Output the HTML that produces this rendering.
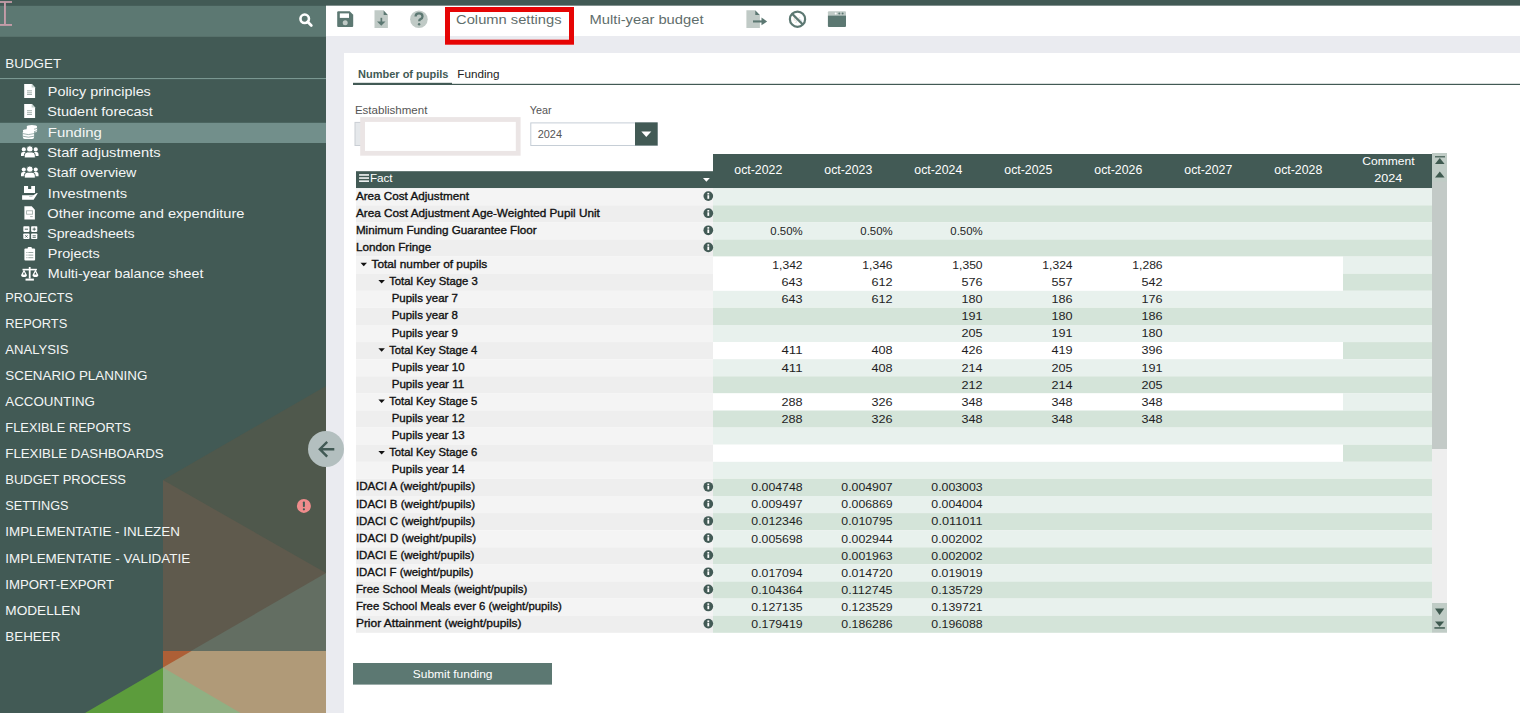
<!DOCTYPE html>
<html><head><meta charset="utf-8"><title>Funding</title>
<style>
html,body{margin:0;padding:0;width:1520px;height:713px;overflow:hidden;background:#eaebf0;font-family:"Liberation Sans", sans-serif;}
svg{display:block;position:absolute;left:0;top:0;font-family:"Liberation Sans", sans-serif;}
</style></head><body>
<svg width="1520" height="713" viewBox="0 0 1520 713">
<rect x="0.00" y="0.00" width="1520.00" height="713.00" fill="#eaebf0" />
<rect x="0.00" y="0.00" width="326.00" height="713.00" fill="#425a55" />
<polygon points="326.00,386.00 163.00,480.00 326.00,600.00" fill="#4f584c" />
<polygon points="163.00,480.00 326.00,573.00 326.00,713.00 163.00,713.00" fill="#5f5a4d" />
<polygon points="326.00,573.00 326.00,655.00 184.00,655.00" fill="#636e62" />
<polygon points="163.00,651.00 326.00,651.00 326.00,713.00 163.00,713.00" fill="#b09a78" />
<polygon points="163.00,651.00 191.50,651.00 163.00,667.50" fill="#ad5f36" />
<polygon points="163.00,667.50 240.50,713.00 163.00,713.00" fill="#90b083" />
<polygon points="163.00,667.50 163.00,713.00 85.00,713.00" fill="#5c9c3c" />
<rect x="0.00" y="0.00" width="1520.00" height="5.80" fill="#425a55" />
<rect x="0.00" y="5.80" width="326.00" height="31.00" fill="#5c7872" />
<rect x="326.00" y="5.80" width="1194.00" height="30.20" fill="#ffffff" />
<rect x="344.00" y="53.00" width="1176.00" height="660.00" fill="#ffffff" />
<text x="5.29" y="68.40" font-size="13" fill="#f4f6f5" textLength="55.82" lengthAdjust="spacingAndGlyphs">BUDGET</text>
<rect x="0.00" y="78.00" width="326.00" height="1.10" fill="#7a9791" />
<rect x="0.00" y="122.80" width="326.00" height="20.20" fill="#728f8b" />
<text x="47.89" y="96.10" font-size="13" fill="#f4f6f5" textLength="102.92" lengthAdjust="spacingAndGlyphs">Policy principles</text>
<text x="47.29" y="115.80" font-size="13" fill="#f4f6f5" textLength="105.62" lengthAdjust="spacingAndGlyphs">Student forecast</text>
<text x="47.89" y="136.70" font-size="13" fill="#f4f6f5" textLength="53.92" lengthAdjust="spacingAndGlyphs">Funding</text>
<text x="47.29" y="156.80" font-size="13" fill="#f4f6f5" textLength="113.32" lengthAdjust="spacingAndGlyphs">Staff adjustments</text>
<text x="47.29" y="176.70" font-size="13" fill="#f4f6f5" textLength="89.12" lengthAdjust="spacingAndGlyphs">Staff overview</text>
<text x="47.89" y="197.50" font-size="13" fill="#f4f6f5" textLength="79.22" lengthAdjust="spacingAndGlyphs">Investments</text>
<text x="47.29" y="217.70" font-size="13" fill="#f4f6f5" textLength="197.22" lengthAdjust="spacingAndGlyphs">Other income and expenditure</text>
<text x="47.29" y="237.70" font-size="13" fill="#f4f6f5" textLength="87.42" lengthAdjust="spacingAndGlyphs">Spreadsheets</text>
<text x="47.89" y="258.30" font-size="13" fill="#f4f6f5" textLength="51.92" lengthAdjust="spacingAndGlyphs">Projects</text>
<text x="47.89" y="278.30" font-size="13" fill="#f4f6f5" textLength="155.52" lengthAdjust="spacingAndGlyphs">Multi-year balance sheet</text>
<text x="5.29" y="302.20" font-size="13" fill="#f4f6f5" textLength="67.62" lengthAdjust="spacingAndGlyphs">PROJECTS</text>
<text x="5.29" y="328.23" font-size="13" fill="#f4f6f5" textLength="62.02" lengthAdjust="spacingAndGlyphs">REPORTS</text>
<text x="5.29" y="354.26" font-size="13" fill="#f4f6f5" textLength="63.12" lengthAdjust="spacingAndGlyphs">ANALYSIS</text>
<text x="5.29" y="380.29" font-size="13" fill="#f4f6f5" textLength="142.12" lengthAdjust="spacingAndGlyphs">SCENARIO PLANNING</text>
<text x="5.29" y="406.32" font-size="13" fill="#f4f6f5" textLength="89.62" lengthAdjust="spacingAndGlyphs">ACCOUNTING</text>
<text x="5.29" y="432.35" font-size="13" fill="#f4f6f5" textLength="125.62" lengthAdjust="spacingAndGlyphs">FLEXIBLE REPORTS</text>
<text x="5.29" y="458.38" font-size="13" fill="#f4f6f5" textLength="158.42" lengthAdjust="spacingAndGlyphs">FLEXIBLE DASHBOARDS</text>
<text x="5.29" y="484.41" font-size="13" fill="#f4f6f5" textLength="120.72" lengthAdjust="spacingAndGlyphs">BUDGET PROCESS</text>
<text x="5.29" y="510.44" font-size="13" fill="#f4f6f5" textLength="63.22" lengthAdjust="spacingAndGlyphs">SETTINGS</text>
<text x="5.29" y="536.47" font-size="13" fill="#f4f6f5" textLength="174.62" lengthAdjust="spacingAndGlyphs">IMPLEMENTATIE - INLEZEN</text>
<text x="5.29" y="562.50" font-size="13" fill="#f4f6f5" textLength="184.92" lengthAdjust="spacingAndGlyphs">IMPLEMENTATIE - VALIDATIE</text>
<text x="5.29" y="588.53" font-size="13" fill="#f4f6f5" textLength="108.92" lengthAdjust="spacingAndGlyphs">IMPORT-EXPORT</text>
<text x="5.29" y="614.56" font-size="13" fill="#f4f6f5" textLength="75.02" lengthAdjust="spacingAndGlyphs">MODELLEN</text>
<text x="5.29" y="640.59" font-size="13" fill="#f4f6f5" textLength="55.02" lengthAdjust="spacingAndGlyphs">BEHEER</text>
<rect x="356.00" y="171.20" width="357.00" height="17.00" fill="#425a55" />
<rect x="713.00" y="154.00" width="719.00" height="34.20" fill="#425a55" />
<rect x="356.00" y="188.20" width="357.00" height="17.10" fill="#f4f4f4" />
<rect x="713.00" y="188.20" width="630.00" height="17.10" fill="#e8f1ed" />
<rect x="1343.00" y="188.20" width="89.00" height="17.10" fill="#e8f1ed" />
<rect x="356.00" y="205.30" width="357.00" height="17.10" fill="#eeeeee" />
<rect x="713.00" y="205.30" width="630.00" height="17.10" fill="#d4e4d9" />
<rect x="1343.00" y="205.30" width="89.00" height="17.10" fill="#d4e4d9" />
<rect x="356.00" y="222.40" width="357.00" height="17.10" fill="#f4f4f4" />
<rect x="713.00" y="222.40" width="630.00" height="17.10" fill="#e8f1ed" />
<rect x="1343.00" y="222.40" width="89.00" height="17.10" fill="#e8f1ed" />
<rect x="356.00" y="239.50" width="357.00" height="17.10" fill="#eeeeee" />
<rect x="713.00" y="239.50" width="630.00" height="17.10" fill="#d4e4d9" />
<rect x="1343.00" y="239.50" width="89.00" height="17.10" fill="#d4e4d9" />
<rect x="356.00" y="256.60" width="357.00" height="17.10" fill="#f4f4f4" />
<rect x="713.00" y="256.60" width="630.00" height="17.10" fill="#ffffff" />
<rect x="1343.00" y="256.60" width="89.00" height="17.10" fill="#e8f1ed" />
<rect x="356.00" y="273.70" width="357.00" height="17.10" fill="#eeeeee" />
<rect x="713.00" y="273.70" width="630.00" height="17.10" fill="#ffffff" />
<rect x="1343.00" y="273.70" width="89.00" height="17.10" fill="#d4e4d9" />
<rect x="356.00" y="290.80" width="357.00" height="17.10" fill="#f4f4f4" />
<rect x="713.00" y="290.80" width="630.00" height="17.10" fill="#e8f1ed" />
<rect x="1343.00" y="290.80" width="89.00" height="17.10" fill="#e8f1ed" />
<rect x="356.00" y="307.90" width="357.00" height="17.10" fill="#eeeeee" />
<rect x="713.00" y="307.90" width="630.00" height="17.10" fill="#d4e4d9" />
<rect x="1343.00" y="307.90" width="89.00" height="17.10" fill="#d4e4d9" />
<rect x="356.00" y="325.00" width="357.00" height="17.10" fill="#f4f4f4" />
<rect x="713.00" y="325.00" width="630.00" height="17.10" fill="#e8f1ed" />
<rect x="1343.00" y="325.00" width="89.00" height="17.10" fill="#e8f1ed" />
<rect x="356.00" y="342.10" width="357.00" height="17.10" fill="#eeeeee" />
<rect x="713.00" y="342.10" width="630.00" height="17.10" fill="#ffffff" />
<rect x="1343.00" y="342.10" width="89.00" height="17.10" fill="#d4e4d9" />
<rect x="356.00" y="359.20" width="357.00" height="17.10" fill="#f4f4f4" />
<rect x="713.00" y="359.20" width="630.00" height="17.10" fill="#e8f1ed" />
<rect x="1343.00" y="359.20" width="89.00" height="17.10" fill="#e8f1ed" />
<rect x="356.00" y="376.30" width="357.00" height="17.10" fill="#eeeeee" />
<rect x="713.00" y="376.30" width="630.00" height="17.10" fill="#d4e4d9" />
<rect x="1343.00" y="376.30" width="89.00" height="17.10" fill="#d4e4d9" />
<rect x="356.00" y="393.40" width="357.00" height="17.10" fill="#f4f4f4" />
<rect x="713.00" y="393.40" width="630.00" height="17.10" fill="#ffffff" />
<rect x="1343.00" y="393.40" width="89.00" height="17.10" fill="#e8f1ed" />
<rect x="356.00" y="410.50" width="357.00" height="17.10" fill="#eeeeee" />
<rect x="713.00" y="410.50" width="630.00" height="17.10" fill="#d4e4d9" />
<rect x="1343.00" y="410.50" width="89.00" height="17.10" fill="#d4e4d9" />
<rect x="356.00" y="427.60" width="357.00" height="17.10" fill="#f4f4f4" />
<rect x="713.00" y="427.60" width="630.00" height="17.10" fill="#e8f1ed" />
<rect x="1343.00" y="427.60" width="89.00" height="17.10" fill="#e8f1ed" />
<rect x="356.00" y="444.70" width="357.00" height="17.10" fill="#eeeeee" />
<rect x="713.00" y="444.70" width="630.00" height="17.10" fill="#ffffff" />
<rect x="1343.00" y="444.70" width="89.00" height="17.10" fill="#d4e4d9" />
<rect x="356.00" y="461.80" width="357.00" height="17.10" fill="#f4f4f4" />
<rect x="713.00" y="461.80" width="630.00" height="17.10" fill="#e8f1ed" />
<rect x="1343.00" y="461.80" width="89.00" height="17.10" fill="#e8f1ed" />
<rect x="356.00" y="478.90" width="357.00" height="17.10" fill="#eeeeee" />
<rect x="713.00" y="478.90" width="630.00" height="17.10" fill="#d4e4d9" />
<rect x="1343.00" y="478.90" width="89.00" height="17.10" fill="#d4e4d9" />
<rect x="356.00" y="496.00" width="357.00" height="17.10" fill="#f4f4f4" />
<rect x="713.00" y="496.00" width="630.00" height="17.10" fill="#e8f1ed" />
<rect x="1343.00" y="496.00" width="89.00" height="17.10" fill="#e8f1ed" />
<rect x="356.00" y="513.10" width="357.00" height="17.10" fill="#eeeeee" />
<rect x="713.00" y="513.10" width="630.00" height="17.10" fill="#d4e4d9" />
<rect x="1343.00" y="513.10" width="89.00" height="17.10" fill="#d4e4d9" />
<rect x="356.00" y="530.20" width="357.00" height="17.10" fill="#f4f4f4" />
<rect x="713.00" y="530.20" width="630.00" height="17.10" fill="#e8f1ed" />
<rect x="1343.00" y="530.20" width="89.00" height="17.10" fill="#e8f1ed" />
<rect x="356.00" y="547.30" width="357.00" height="17.10" fill="#eeeeee" />
<rect x="713.00" y="547.30" width="630.00" height="17.10" fill="#d4e4d9" />
<rect x="1343.00" y="547.30" width="89.00" height="17.10" fill="#d4e4d9" />
<rect x="356.00" y="564.40" width="357.00" height="17.10" fill="#f4f4f4" />
<rect x="713.00" y="564.40" width="630.00" height="17.10" fill="#e8f1ed" />
<rect x="1343.00" y="564.40" width="89.00" height="17.10" fill="#e8f1ed" />
<rect x="356.00" y="581.50" width="357.00" height="17.10" fill="#eeeeee" />
<rect x="713.00" y="581.50" width="630.00" height="17.10" fill="#d4e4d9" />
<rect x="1343.00" y="581.50" width="89.00" height="17.10" fill="#d4e4d9" />
<rect x="356.00" y="598.60" width="357.00" height="17.10" fill="#f4f4f4" />
<rect x="713.00" y="598.60" width="630.00" height="17.10" fill="#e8f1ed" />
<rect x="1343.00" y="598.60" width="89.00" height="17.10" fill="#e8f1ed" />
<rect x="356.00" y="615.70" width="357.00" height="17.10" fill="#eeeeee" />
<rect x="713.00" y="615.70" width="630.00" height="17.10" fill="#d4e4d9" />
<rect x="1343.00" y="615.70" width="89.00" height="17.10" fill="#d4e4d9" />
<text x="355.90" y="199.70" font-size="11" fill="#111111" stroke="#111111" stroke-width="0.35" textLength="113.00" lengthAdjust="spacingAndGlyphs">Area Cost Adjustment</text>
<circle cx="708.3" cy="196.10" r="4.85" fill="#425a55"/>
<rect x="707.40" y="195.20" width="1.8" height="3.6" fill="#fff"/>
<rect x="707.40" y="192.90" width="1.8" height="1.6" fill="#fff"/>
<text x="355.90" y="216.80" font-size="11" fill="#111111" stroke="#111111" stroke-width="0.35" textLength="243.90" lengthAdjust="spacingAndGlyphs">Area Cost Adjustment Age-Weighted Pupil Unit</text>
<circle cx="708.3" cy="213.20" r="4.85" fill="#425a55"/>
<rect x="707.40" y="212.30" width="1.8" height="3.6" fill="#fff"/>
<rect x="707.40" y="210.00" width="1.8" height="1.6" fill="#fff"/>
<text x="355.90" y="233.90" font-size="11" fill="#111111" stroke="#111111" stroke-width="0.35" textLength="180.80" lengthAdjust="spacingAndGlyphs">Minimum Funding Guarantee Floor</text>
<circle cx="708.3" cy="230.30" r="4.85" fill="#425a55"/>
<rect x="707.40" y="229.40" width="1.8" height="3.6" fill="#fff"/>
<rect x="707.40" y="227.10" width="1.8" height="1.6" fill="#fff"/>
<text x="355.90" y="251.00" font-size="11" fill="#111111" stroke="#111111" stroke-width="0.35" textLength="75.40" lengthAdjust="spacingAndGlyphs">London Fringe</text>
<circle cx="708.3" cy="247.40" r="4.85" fill="#425a55"/>
<rect x="707.40" y="246.50" width="1.8" height="3.6" fill="#fff"/>
<rect x="707.40" y="244.20" width="1.8" height="1.6" fill="#fff"/>
<text x="371.50" y="268.10" font-size="11" fill="#111111" stroke="#111111" stroke-width="0.35" textLength="115.80" lengthAdjust="spacingAndGlyphs">Total number of pupils</text>
<polygon points="360.50,262.80 367.00,262.80 363.75,266.30" fill="#111111" />
<text x="389.20" y="285.20" font-size="11" fill="#111111" stroke="#111111" stroke-width="0.35" textLength="88.60" lengthAdjust="spacingAndGlyphs">Total Key Stage 3</text>
<polygon points="378.40,279.90 384.90,279.90 381.65,283.40" fill="#111111" />
<text x="391.70" y="302.30" font-size="11" fill="#111111" stroke="#111111" stroke-width="0.35" textLength="66.20" lengthAdjust="spacingAndGlyphs">Pupils year 7</text>
<text x="391.70" y="319.40" font-size="11" fill="#111111" stroke="#111111" stroke-width="0.35" textLength="66.20" lengthAdjust="spacingAndGlyphs">Pupils year 8</text>
<text x="391.70" y="336.50" font-size="11" fill="#111111" stroke="#111111" stroke-width="0.35" textLength="66.20" lengthAdjust="spacingAndGlyphs">Pupils year 9</text>
<text x="389.20" y="353.60" font-size="11" fill="#111111" stroke="#111111" stroke-width="0.35" textLength="88.20" lengthAdjust="spacingAndGlyphs">Total Key Stage 4</text>
<polygon points="378.40,348.30 384.90,348.30 381.65,351.80" fill="#111111" />
<text x="391.70" y="370.70" font-size="11" fill="#111111" stroke="#111111" stroke-width="0.35" textLength="72.90" lengthAdjust="spacingAndGlyphs">Pupils year 10</text>
<text x="391.70" y="387.80" font-size="11" fill="#111111" stroke="#111111" stroke-width="0.35" textLength="72.50" lengthAdjust="spacingAndGlyphs">Pupils year 11</text>
<text x="389.20" y="404.90" font-size="11" fill="#111111" stroke="#111111" stroke-width="0.35" textLength="88.20" lengthAdjust="spacingAndGlyphs">Total Key Stage 5</text>
<polygon points="378.40,399.60 384.90,399.60 381.65,403.10" fill="#111111" />
<text x="391.70" y="422.00" font-size="11" fill="#111111" stroke="#111111" stroke-width="0.35" textLength="72.90" lengthAdjust="spacingAndGlyphs">Pupils year 12</text>
<text x="391.70" y="439.10" font-size="11" fill="#111111" stroke="#111111" stroke-width="0.35" textLength="72.90" lengthAdjust="spacingAndGlyphs">Pupils year 13</text>
<text x="389.20" y="456.20" font-size="11" fill="#111111" stroke="#111111" stroke-width="0.35" textLength="88.20" lengthAdjust="spacingAndGlyphs">Total Key Stage 6</text>
<polygon points="378.40,450.90 384.90,450.90 381.65,454.40" fill="#111111" />
<text x="391.70" y="473.30" font-size="11" fill="#111111" stroke="#111111" stroke-width="0.35" textLength="72.90" lengthAdjust="spacingAndGlyphs">Pupils year 14</text>
<text x="355.90" y="490.40" font-size="11" fill="#111111" stroke="#111111" stroke-width="0.35" textLength="119.20" lengthAdjust="spacingAndGlyphs">IDACI A (weight/pupils)</text>
<circle cx="708.3" cy="486.80" r="4.85" fill="#425a55"/>
<rect x="707.40" y="485.90" width="1.8" height="3.6" fill="#fff"/>
<rect x="707.40" y="483.60" width="1.8" height="1.6" fill="#fff"/>
<text x="355.90" y="507.50" font-size="11" fill="#111111" stroke="#111111" stroke-width="0.35" textLength="119.20" lengthAdjust="spacingAndGlyphs">IDACI B (weight/pupils)</text>
<circle cx="708.3" cy="503.90" r="4.85" fill="#425a55"/>
<rect x="707.40" y="503.00" width="1.8" height="3.6" fill="#fff"/>
<rect x="707.40" y="500.70" width="1.8" height="1.6" fill="#fff"/>
<text x="355.90" y="524.60" font-size="11" fill="#111111" stroke="#111111" stroke-width="0.35" textLength="119.20" lengthAdjust="spacingAndGlyphs">IDACI C (weight/pupils)</text>
<circle cx="708.3" cy="521.00" r="4.85" fill="#425a55"/>
<rect x="707.40" y="520.10" width="1.8" height="3.6" fill="#fff"/>
<rect x="707.40" y="517.80" width="1.8" height="1.6" fill="#fff"/>
<text x="355.90" y="541.70" font-size="11" fill="#111111" stroke="#111111" stroke-width="0.35" textLength="120.10" lengthAdjust="spacingAndGlyphs">IDACI D (weight/pupils)</text>
<circle cx="708.3" cy="538.10" r="4.85" fill="#425a55"/>
<rect x="707.40" y="537.20" width="1.8" height="3.6" fill="#fff"/>
<rect x="707.40" y="534.90" width="1.8" height="1.6" fill="#fff"/>
<text x="355.90" y="558.80" font-size="11" fill="#111111" stroke="#111111" stroke-width="0.35" textLength="118.40" lengthAdjust="spacingAndGlyphs">IDACI E (weight/pupils)</text>
<circle cx="708.3" cy="555.20" r="4.85" fill="#425a55"/>
<rect x="707.40" y="554.30" width="1.8" height="3.6" fill="#fff"/>
<rect x="707.40" y="552.00" width="1.8" height="1.6" fill="#fff"/>
<text x="355.90" y="575.90" font-size="11" fill="#111111" stroke="#111111" stroke-width="0.35" textLength="117.50" lengthAdjust="spacingAndGlyphs">IDACI F (weight/pupils)</text>
<circle cx="708.3" cy="572.30" r="4.85" fill="#425a55"/>
<rect x="707.40" y="571.40" width="1.8" height="3.6" fill="#fff"/>
<rect x="707.40" y="569.10" width="1.8" height="1.6" fill="#fff"/>
<text x="355.90" y="593.00" font-size="11" fill="#111111" stroke="#111111" stroke-width="0.35" textLength="171.40" lengthAdjust="spacingAndGlyphs">Free School Meals (weight/pupils)</text>
<circle cx="708.3" cy="589.40" r="4.85" fill="#425a55"/>
<rect x="707.40" y="588.50" width="1.8" height="3.6" fill="#fff"/>
<rect x="707.40" y="586.20" width="1.8" height="1.6" fill="#fff"/>
<text x="355.90" y="610.10" font-size="11" fill="#111111" stroke="#111111" stroke-width="0.35" textLength="206.00" lengthAdjust="spacingAndGlyphs">Free School Meals ever 6 (weight/pupils)</text>
<circle cx="708.3" cy="606.50" r="4.85" fill="#425a55"/>
<rect x="707.40" y="605.60" width="1.8" height="3.6" fill="#fff"/>
<rect x="707.40" y="603.30" width="1.8" height="1.6" fill="#fff"/>
<text x="355.90" y="627.20" font-size="11" fill="#111111" stroke="#111111" stroke-width="0.35" textLength="165.70" lengthAdjust="spacingAndGlyphs">Prior Attainment (weight/pupils)</text>
<circle cx="708.3" cy="623.60" r="4.85" fill="#425a55"/>
<rect x="707.40" y="622.70" width="1.8" height="3.6" fill="#fff"/>
<rect x="707.40" y="620.40" width="1.8" height="1.6" fill="#fff"/>
<text x="770.30" y="234.75" font-size="11" fill="#1e1e1e" textLength="32.30" lengthAdjust="spacingAndGlyphs">0.50%</text>
<text x="860.30" y="234.75" font-size="11" fill="#1e1e1e" textLength="32.30" lengthAdjust="spacingAndGlyphs">0.50%</text>
<text x="950.30" y="234.75" font-size="11" fill="#1e1e1e" textLength="32.30" lengthAdjust="spacingAndGlyphs">0.50%</text>
<text x="772.30" y="268.95" font-size="11" fill="#1e1e1e" textLength="30.30" lengthAdjust="spacingAndGlyphs">1,342</text>
<text x="862.30" y="268.95" font-size="11" fill="#1e1e1e" textLength="30.30" lengthAdjust="spacingAndGlyphs">1,346</text>
<text x="952.30" y="268.95" font-size="11" fill="#1e1e1e" textLength="30.30" lengthAdjust="spacingAndGlyphs">1,350</text>
<text x="1042.30" y="268.95" font-size="11" fill="#1e1e1e" textLength="30.30" lengthAdjust="spacingAndGlyphs">1,324</text>
<text x="1132.30" y="268.95" font-size="11" fill="#1e1e1e" textLength="30.30" lengthAdjust="spacingAndGlyphs">1,286</text>
<text x="781.50" y="286.05" font-size="11" fill="#1e1e1e" textLength="21.10" lengthAdjust="spacingAndGlyphs">643</text>
<text x="871.50" y="286.05" font-size="11" fill="#1e1e1e" textLength="21.10" lengthAdjust="spacingAndGlyphs">612</text>
<text x="961.50" y="286.05" font-size="11" fill="#1e1e1e" textLength="21.10" lengthAdjust="spacingAndGlyphs">576</text>
<text x="1051.50" y="286.05" font-size="11" fill="#1e1e1e" textLength="21.10" lengthAdjust="spacingAndGlyphs">557</text>
<text x="1141.50" y="286.05" font-size="11" fill="#1e1e1e" textLength="21.10" lengthAdjust="spacingAndGlyphs">542</text>
<text x="781.50" y="303.15" font-size="11" fill="#1e1e1e" textLength="21.10" lengthAdjust="spacingAndGlyphs">643</text>
<text x="871.50" y="303.15" font-size="11" fill="#1e1e1e" textLength="21.10" lengthAdjust="spacingAndGlyphs">612</text>
<text x="961.50" y="303.15" font-size="11" fill="#1e1e1e" textLength="21.10" lengthAdjust="spacingAndGlyphs">180</text>
<text x="1051.50" y="303.15" font-size="11" fill="#1e1e1e" textLength="21.10" lengthAdjust="spacingAndGlyphs">186</text>
<text x="1141.50" y="303.15" font-size="11" fill="#1e1e1e" textLength="21.10" lengthAdjust="spacingAndGlyphs">176</text>
<text x="961.50" y="320.25" font-size="11" fill="#1e1e1e" textLength="21.10" lengthAdjust="spacingAndGlyphs">191</text>
<text x="1051.50" y="320.25" font-size="11" fill="#1e1e1e" textLength="21.10" lengthAdjust="spacingAndGlyphs">180</text>
<text x="1141.50" y="320.25" font-size="11" fill="#1e1e1e" textLength="21.10" lengthAdjust="spacingAndGlyphs">186</text>
<text x="961.50" y="337.35" font-size="11" fill="#1e1e1e" textLength="21.10" lengthAdjust="spacingAndGlyphs">205</text>
<text x="1051.50" y="337.35" font-size="11" fill="#1e1e1e" textLength="21.10" lengthAdjust="spacingAndGlyphs">191</text>
<text x="1141.50" y="337.35" font-size="11" fill="#1e1e1e" textLength="21.10" lengthAdjust="spacingAndGlyphs">180</text>
<text x="781.50" y="354.45" font-size="11" fill="#1e1e1e" textLength="21.10" lengthAdjust="spacingAndGlyphs">411</text>
<text x="871.50" y="354.45" font-size="11" fill="#1e1e1e" textLength="21.10" lengthAdjust="spacingAndGlyphs">408</text>
<text x="961.50" y="354.45" font-size="11" fill="#1e1e1e" textLength="21.10" lengthAdjust="spacingAndGlyphs">426</text>
<text x="1051.50" y="354.45" font-size="11" fill="#1e1e1e" textLength="21.10" lengthAdjust="spacingAndGlyphs">419</text>
<text x="1141.50" y="354.45" font-size="11" fill="#1e1e1e" textLength="21.10" lengthAdjust="spacingAndGlyphs">396</text>
<text x="781.50" y="371.55" font-size="11" fill="#1e1e1e" textLength="21.10" lengthAdjust="spacingAndGlyphs">411</text>
<text x="871.50" y="371.55" font-size="11" fill="#1e1e1e" textLength="21.10" lengthAdjust="spacingAndGlyphs">408</text>
<text x="961.50" y="371.55" font-size="11" fill="#1e1e1e" textLength="21.10" lengthAdjust="spacingAndGlyphs">214</text>
<text x="1051.50" y="371.55" font-size="11" fill="#1e1e1e" textLength="21.10" lengthAdjust="spacingAndGlyphs">205</text>
<text x="1141.50" y="371.55" font-size="11" fill="#1e1e1e" textLength="21.10" lengthAdjust="spacingAndGlyphs">191</text>
<text x="961.50" y="388.65" font-size="11" fill="#1e1e1e" textLength="21.10" lengthAdjust="spacingAndGlyphs">212</text>
<text x="1051.50" y="388.65" font-size="11" fill="#1e1e1e" textLength="21.10" lengthAdjust="spacingAndGlyphs">214</text>
<text x="1141.50" y="388.65" font-size="11" fill="#1e1e1e" textLength="21.10" lengthAdjust="spacingAndGlyphs">205</text>
<text x="781.50" y="405.75" font-size="11" fill="#1e1e1e" textLength="21.10" lengthAdjust="spacingAndGlyphs">288</text>
<text x="871.50" y="405.75" font-size="11" fill="#1e1e1e" textLength="21.10" lengthAdjust="spacingAndGlyphs">326</text>
<text x="961.50" y="405.75" font-size="11" fill="#1e1e1e" textLength="21.10" lengthAdjust="spacingAndGlyphs">348</text>
<text x="1051.50" y="405.75" font-size="11" fill="#1e1e1e" textLength="21.10" lengthAdjust="spacingAndGlyphs">348</text>
<text x="1141.50" y="405.75" font-size="11" fill="#1e1e1e" textLength="21.10" lengthAdjust="spacingAndGlyphs">348</text>
<text x="781.50" y="422.85" font-size="11" fill="#1e1e1e" textLength="21.10" lengthAdjust="spacingAndGlyphs">288</text>
<text x="871.50" y="422.85" font-size="11" fill="#1e1e1e" textLength="21.10" lengthAdjust="spacingAndGlyphs">326</text>
<text x="961.50" y="422.85" font-size="11" fill="#1e1e1e" textLength="21.10" lengthAdjust="spacingAndGlyphs">348</text>
<text x="1051.50" y="422.85" font-size="11" fill="#1e1e1e" textLength="21.10" lengthAdjust="spacingAndGlyphs">348</text>
<text x="1141.50" y="422.85" font-size="11" fill="#1e1e1e" textLength="21.10" lengthAdjust="spacingAndGlyphs">348</text>
<text x="751.30" y="491.25" font-size="11" fill="#1e1e1e" textLength="51.30" lengthAdjust="spacingAndGlyphs">0.004748</text>
<text x="841.30" y="491.25" font-size="11" fill="#1e1e1e" textLength="51.30" lengthAdjust="spacingAndGlyphs">0.004907</text>
<text x="931.30" y="491.25" font-size="11" fill="#1e1e1e" textLength="51.30" lengthAdjust="spacingAndGlyphs">0.003003</text>
<text x="751.30" y="508.35" font-size="11" fill="#1e1e1e" textLength="51.30" lengthAdjust="spacingAndGlyphs">0.009497</text>
<text x="841.30" y="508.35" font-size="11" fill="#1e1e1e" textLength="51.30" lengthAdjust="spacingAndGlyphs">0.006869</text>
<text x="931.30" y="508.35" font-size="11" fill="#1e1e1e" textLength="51.30" lengthAdjust="spacingAndGlyphs">0.004004</text>
<text x="751.30" y="525.45" font-size="11" fill="#1e1e1e" textLength="51.30" lengthAdjust="spacingAndGlyphs">0.012346</text>
<text x="841.30" y="525.45" font-size="11" fill="#1e1e1e" textLength="51.30" lengthAdjust="spacingAndGlyphs">0.010795</text>
<text x="931.30" y="525.45" font-size="11" fill="#1e1e1e" textLength="51.30" lengthAdjust="spacingAndGlyphs">0.011011</text>
<text x="751.30" y="542.55" font-size="11" fill="#1e1e1e" textLength="51.30" lengthAdjust="spacingAndGlyphs">0.005698</text>
<text x="841.30" y="542.55" font-size="11" fill="#1e1e1e" textLength="51.30" lengthAdjust="spacingAndGlyphs">0.002944</text>
<text x="931.30" y="542.55" font-size="11" fill="#1e1e1e" textLength="51.30" lengthAdjust="spacingAndGlyphs">0.002002</text>
<text x="841.30" y="559.65" font-size="11" fill="#1e1e1e" textLength="51.30" lengthAdjust="spacingAndGlyphs">0.001963</text>
<text x="931.30" y="559.65" font-size="11" fill="#1e1e1e" textLength="51.30" lengthAdjust="spacingAndGlyphs">0.002002</text>
<text x="751.30" y="576.75" font-size="11" fill="#1e1e1e" textLength="51.30" lengthAdjust="spacingAndGlyphs">0.017094</text>
<text x="841.30" y="576.75" font-size="11" fill="#1e1e1e" textLength="51.30" lengthAdjust="spacingAndGlyphs">0.014720</text>
<text x="931.30" y="576.75" font-size="11" fill="#1e1e1e" textLength="51.30" lengthAdjust="spacingAndGlyphs">0.019019</text>
<text x="751.30" y="593.85" font-size="11" fill="#1e1e1e" textLength="51.30" lengthAdjust="spacingAndGlyphs">0.104364</text>
<text x="841.30" y="593.85" font-size="11" fill="#1e1e1e" textLength="51.30" lengthAdjust="spacingAndGlyphs">0.112745</text>
<text x="931.30" y="593.85" font-size="11" fill="#1e1e1e" textLength="51.30" lengthAdjust="spacingAndGlyphs">0.135729</text>
<text x="751.30" y="610.95" font-size="11" fill="#1e1e1e" textLength="51.30" lengthAdjust="spacingAndGlyphs">0.127135</text>
<text x="841.30" y="610.95" font-size="11" fill="#1e1e1e" textLength="51.30" lengthAdjust="spacingAndGlyphs">0.123529</text>
<text x="931.30" y="610.95" font-size="11" fill="#1e1e1e" textLength="51.30" lengthAdjust="spacingAndGlyphs">0.139721</text>
<text x="751.30" y="628.05" font-size="11" fill="#1e1e1e" textLength="51.30" lengthAdjust="spacingAndGlyphs">0.179419</text>
<text x="841.30" y="628.05" font-size="11" fill="#1e1e1e" textLength="51.30" lengthAdjust="spacingAndGlyphs">0.186286</text>
<text x="931.30" y="628.05" font-size="11" fill="#1e1e1e" textLength="51.30" lengthAdjust="spacingAndGlyphs">0.196088</text>
<text x="734.35" y="174.20" font-size="12" fill="#ffffff" textLength="47.91" lengthAdjust="spacingAndGlyphs">oct-2022</text>
<text x="824.35" y="174.20" font-size="12" fill="#ffffff" textLength="47.91" lengthAdjust="spacingAndGlyphs">oct-2023</text>
<text x="914.35" y="174.20" font-size="12" fill="#ffffff" textLength="47.91" lengthAdjust="spacingAndGlyphs">oct-2024</text>
<text x="1004.35" y="174.20" font-size="12" fill="#ffffff" textLength="47.91" lengthAdjust="spacingAndGlyphs">oct-2025</text>
<text x="1094.35" y="174.20" font-size="12" fill="#ffffff" textLength="47.91" lengthAdjust="spacingAndGlyphs">oct-2026</text>
<text x="1184.35" y="174.20" font-size="12" fill="#ffffff" textLength="47.91" lengthAdjust="spacingAndGlyphs">oct-2027</text>
<text x="1274.35" y="174.20" font-size="12" fill="#ffffff" textLength="47.91" lengthAdjust="spacingAndGlyphs">oct-2028</text>
<text x="1362.37" y="165.00" font-size="11.5" fill="#ffffff" textLength="52.25" lengthAdjust="spacingAndGlyphs">Comment</text>
<text x="1374.27" y="182.10" font-size="11.5" fill="#ffffff" textLength="28.15" lengthAdjust="spacingAndGlyphs">2024</text>
<rect x="359.1" y="174.2" width="9.9" height="1.5" fill="#fff"/><rect x="359.1" y="177.3" width="9.9" height="1.5" fill="#fff"/><rect x="359.1" y="180.4" width="9.9" height="1.5" fill="#fff"/>
<text x="369.90" y="181.90" font-size="11" fill="#ffffff" textLength="22.70" lengthAdjust="spacingAndGlyphs">Fact</text>
<polygon points="703.00,178.00 709.80,178.00 706.40,181.80" fill="#ffffff" />
<rect x="1432.00" y="153.00" width="15.00" height="479.70" fill="#eeeeee" />
<rect x="1432.00" y="153.00" width="15.00" height="296.00" fill="#c3cac7" />
<rect x="1432.00" y="153.00" width="15.00" height="28.60" fill="#c0ccc6" />
<rect x="1432.00" y="603.00" width="15.00" height="29.70" fill="#c0ccc6" />
<rect x="1435.00" y="156.20" width="10.00" height="1.20" fill="#3f5a50" />
<polygon points="1435.00,163.90 1444.60,163.90 1439.80,157.90" fill="#3f5a50" />
<polygon points="1435.00,177.40 1444.60,177.40 1439.80,171.60" fill="#3f5a50" />
<polygon points="1435.00,608.40 1444.20,608.40 1439.60,614.90" fill="#3f5a50" />
<polygon points="1435.00,621.40 1444.20,621.40 1439.60,626.80" fill="#3f5a50" />
<rect x="1434.40" y="627.20" width="10.50" height="1.50" fill="#3f5a50" />
<text x="358.00" y="77.90" font-size="11" fill="#425a55" font-weight="bold" textLength="90.50" lengthAdjust="spacingAndGlyphs">Number of pupils</text>
<text x="457.30" y="77.90" font-size="11" fill="#222222" textLength="42.20" lengthAdjust="spacingAndGlyphs">Funding</text>
<rect x="353.00" y="83.80" width="1167.00" height="1.20" fill="#425a55" />
<rect x="353.00" y="82.80" width="99.00" height="2.20" fill="#425a55" />
<text x="354.90" y="114.30" font-size="11" fill="#555555" textLength="72.50" lengthAdjust="spacingAndGlyphs">Establishment</text>
<text x="529.70" y="114.40" font-size="11" fill="#555555" textLength="21.80" lengthAdjust="spacingAndGlyphs">Year</text>
<rect x="355.00" y="122.40" width="160.00" height="23.10" fill="#e5e8eb" stroke="#c9ced4" stroke-width="1"/>
<rect x="362.60" y="119.50" width="155.60" height="33.80" fill="#ffffff" stroke="#ebe5e5" stroke-width="4.8"/>
<rect x="530.80" y="122.90" width="126.60" height="22.60" fill="#ffffff" stroke="#c6ced6" stroke-width="1"/>
<rect x="635.00" y="122.40" width="22.60" height="23.10" fill="#425a55" />
<polygon points="641.30,131.50 651.30,131.50 646.30,137.00" fill="#ffffff" />
<text x="537.70" y="138.20" font-size="11" fill="#555555" textLength="24.30" lengthAdjust="spacingAndGlyphs">2024</text>
<rect x="353.00" y="663.00" width="199.00" height="21.60" fill="#5c7872" />
<text x="412.80" y="677.90" font-size="11" fill="#ffffff" textLength="79.70" lengthAdjust="spacingAndGlyphs">Submit funding</text>
<text x="456.09" y="24.25" font-size="13" fill="#5f6e6c" textLength="105.42" lengthAdjust="spacingAndGlyphs">Column settings</text>
<text x="589.59" y="24.25" font-size="13" fill="#5f6e6c" textLength="113.92" lengthAdjust="spacingAndGlyphs">Multi-year budget</text>
<rect x="447.50" y="9.50" width="124.00" height="32.70" fill="none" stroke="#e60505" stroke-width="5"/>
<path d="M337.2,12.2 a1,1 0 0 1 1,-1 h11.5 l3.5,3.5 v11.3 a1,1 0 0 1 -1,1 h-14 a1,1 0 0 1 -1,-1 z" fill="#5c7872"/>
<rect x="339.8" y="13.4" width="9.2" height="4.5" fill="#fff"/>
<circle cx="345.2" cy="22.7" r="2.5" fill="#c0cac6"/>
<path d="M374.5,10.2 h9 v4.7 h4.4 v13 h-13.4 z" fill="#c0cac6"/>
<path d="M383.5,10.2 l4.4,4.7 h-4.4 z" fill="#5c7872"/>
<rect x="380.5" y="17.8" width="1.7" height="4.5" fill="#5c7872"/>
<path d="M377,21.6 h8.5 l-4.25,4.2 z" fill="#5c7872"/>
<circle cx="418.9" cy="19.2" r="8.8" fill="#c0cac6"/>
<path d="M415.6,16.6 q0,-3.2 3.4,-3.2 q3.5,0 3.5,3 q0,1.8 -2,2.7 q-1.3,0.6 -1.3,2.2" fill="none" stroke="#5c7872" stroke-width="2.3"/><circle cx="419.1" cy="24.2" r="1.25" fill="#5c7872"/>
<path d="M746.4,10.2 h8.8 v4.7 h4.7 v13 h-13.5 z" fill="#c0cac6"/>
<path d="M755.2,10.2 l4.7,4.7 h-4.7 z" fill="#5c7872"/>
<rect x="753" y="20.4" width="9.5" height="2.1" fill="#5c7872"/>
<path d="M761.5,17.4 l5.6,4 l-5.6,3.9 z" fill="#5c7872"/>
<text x="797.8" y="23" font-size="9.5" fill="#c9d0ce" text-anchor="middle">%</text>
<circle cx="797.5" cy="19.2" r="7.6" fill="none" stroke="#5c7872" stroke-width="2.2"/>
<line x1="792.2" y1="13.9" x2="802.8" y2="24.5" stroke="#5c7872" stroke-width="2.2"/>
<path d="M827.9,15.6 v-3.4 a1,1 0 0 1 1,-1 h16.1 a1,1 0 0 1 1,1 v3.4 z" fill="#c0cac6"/>
<path d="M827.9,15.6 h18.1 v10.4 a1,1 0 0 1 -1,1 h-16.1 a1,1 0 0 1 -1,-1 z" fill="#5c7872"/>
<circle cx="835.7" cy="13.5" r="1" fill="#fff"/><circle cx="839.3" cy="13.5" r="1" fill="#5c7872"/><circle cx="842.6" cy="13.5" r="1" fill="#5c7872"/>
<circle cx="304.7" cy="18.8" r="4.25" fill="none" stroke="#fff" stroke-width="2.6"/>
<line x1="307.6" y1="21.8" x2="311.3" y2="25.5" stroke="#fff" stroke-width="2.8" stroke-linecap="round"/>
<rect x="0" y="1.1" width="12" height="1.8" fill="#c49ca8"/><rect x="4" y="2.2" width="1.9" height="22.5" fill="#c49ca8"/><rect x="0" y="24" width="12" height="1.9" fill="#c49ca8"/>
<path d="M24.2,84.00 h7.8 l3.1,3.6 v10.4 h-10.9 z" fill="#ffffff"/>
<path d="M31.6,84.00 v3.6 h3.5 z" fill="#c5d2cf"/>
<rect x="27" y="90.40" width="5" height="0.9" fill="#9aa8a4"/>
<rect x="27" y="92.40" width="5" height="0.9" fill="#9aa8a4"/>
<rect x="27" y="94.10" width="5" height="0.9" fill="#9aa8a4"/>
<path d="M24.2,103.90 h7.8 l3.1,3.6 v10.4 h-10.9 z" fill="#ffffff"/>
<path d="M31.6,103.90 v3.6 h3.5 z" fill="#c5d2cf"/>
<rect x="27" y="110.30" width="5" height="0.9" fill="#9aa8a4"/>
<rect x="27" y="112.30" width="5" height="0.9" fill="#9aa8a4"/>
<rect x="27" y="114.00" width="5" height="0.9" fill="#9aa8a4"/>
<g fill="#ffffff"><ellipse cx="31.9" cy="126.6" rx="5.2" ry="1.6"/><rect x="26.7" y="126.6" width="10.4" height="5.6" rx="1.5"/><ellipse cx="28.45" cy="130.6" rx="5.65" ry="1.7"/><rect x="22.8" y="130.6" width="11.3" height="8.5" rx="2"/></g>
<g stroke="#728f8b" stroke-width="0.7" fill="none"><path d="M22.8,133.6 q5.65,2 11.3,0 M22.8,136.2 q5.65,2 11.3,0 M34.1,129.2 q1.7,-0.3 3,-1 M34.1,131.6 q1.7,-0.3 3,-1"/></g>
<g fill="#ffffff"><circle cx="23.8" cy="149.40" r="2.1"/><circle cx="35.7" cy="149.40" r="2.1"/><path d="M21,156.10 v-2.2 a2,2 0 0 1 2,-2 h2.6 v4.2 z"/><path d="M38.5,156.10 v-2.2 a2,2 0 0 0 -2,-2 h-2.6 v4.2 z"/></g>
<g fill="#ffffff" stroke="#425a55" stroke-width="0.9"><circle cx="29.8" cy="149.10" r="3.3"/><path d="M24.3,157.90 v-2.6 a3.3,3.3 0 0 1 3.3,-3.3 h4.4 a3.3,3.3 0 0 1 3.3,3.3 v2.6 z"/></g>
<g fill="#ffffff"><circle cx="23.8" cy="169.60" r="2.1"/><circle cx="35.7" cy="169.60" r="2.1"/><path d="M21,176.30 v-2.2 a2,2 0 0 1 2,-2 h2.6 v4.2 z"/><path d="M38.5,176.30 v-2.2 a2,2 0 0 0 -2,-2 h-2.6 v4.2 z"/></g>
<g fill="#ffffff" stroke="#425a55" stroke-width="0.9"><circle cx="29.8" cy="169.30" r="3.3"/><path d="M24.3,178.10 v-2.6 a3.3,3.3 0 0 1 3.3,-3.3 h4.4 a3.3,3.3 0 0 1 3.3,3.3 v2.6 z"/></g>
<g fill="#ffffff"><path d="M24,185.9 h4.1 v3.1 h3.1 v-3.1 h3.8 v7.2 h-11 z"/><path d="M22.1,195.3 h11.3 l3.4,-2.3 q1,-0.4 0.8,0.6 l-4,6.2 h-11.5 z"/></g>
<path d="M29.2,196.5 h3.3" stroke="#9aa8a4" stroke-width="0.6"/>
<path d="M24.4,206.3 h7.3 l3.2,3.4 v9.7 h-10.5 z" fill="#ffffff"/>
<rect x="26.6" y="210.8" width="6" height="3.4" fill="none" stroke="#9aa8a4" stroke-width="0.8"/><rect x="30.2" y="216.2" width="2.5" height="0.9" fill="#9aa8a4"/>
<g fill="#ffffff"><rect x="23.3" y="226.3" width="6.2" height="5.6" rx="0.8"/><rect x="31.1" y="226.3" width="6.2" height="5.6" rx="0.8"/><rect x="23.3" y="233.5" width="6.2" height="5.6" rx="0.8"/><rect x="31.1" y="233.5" width="6.2" height="5.6" rx="0.8"/></g>
<g fill="#425a55"><rect x="24.8" y="228.7" width="3.2" height="0.9"/><rect x="32.6" y="228.7" width="3.2" height="0.9"/><rect x="33.75" y="227.55" width="0.9" height="3.2"/><rect x="32.6" y="235.4" width="3.2" height="0.8"/><rect x="32.6" y="236.9" width="3.2" height="0.8"/></g>
<path d="M25.2,235.2 l2.4,2.4 M27.6,235.2 l-2.4,2.4" stroke="#425a55" stroke-width="0.8"/>
<g fill="#ffffff"><rect x="24.4" y="248.6" width="10.7" height="12" rx="1"/><rect x="27.6" y="247" width="4.3" height="2.6" rx="1"/></g>
<g fill="#9aa8a4"><rect x="26.3" y="252" width="1.2" height="1"/><rect x="28.3" y="252" width="5" height="1"/><rect x="26.3" y="254.6" width="1.2" height="1"/><rect x="28.3" y="254.6" width="5" height="1"/><rect x="26.3" y="257.2" width="1.2" height="1"/><rect x="28.3" y="257.2" width="5" height="1"/></g>
<g fill="#ffffff"><rect x="28.8" y="267" width="1.8" height="11.6"/><rect x="25.5" y="278.6" width="8.4" height="2"/><rect x="22.5" y="268.8" width="14.4" height="1.6"/><path d="M21.1,275 l2.9,-5.5 l2.9,5.5 a2.9,2 0 0 1 -5.8,0 z"/><path d="M32.5,275 l2.9,-5.5 l2.9,5.5 a2.9,2 0 0 1 -5.8,0 z"/></g>
<g fill="#425a55"><path d="M22.8,274.4 l1.2,-2.5 l1.2,2.5 z"/><path d="M34.2,274.4 l1.2,-2.5 l1.2,2.5 z"/></g>
<circle cx="326" cy="449" r="18" fill="#b3bfbf"/>
<path d="M319.6,449.2 h14.7 M327.2,441.8 l-7.4,7.4 l7.4,7.4" fill="none" stroke="#425a55" stroke-width="2.4"/>
<circle cx="303.9" cy="505.9" r="7" fill="#f08c8c"/>
<rect x="302.9" y="501.5" width="2" height="5.6" rx="0.8" fill="#425a55"/><circle cx="303.9" cy="509.3" r="1.1" fill="#425a55"/>
</svg>
</body></html>
